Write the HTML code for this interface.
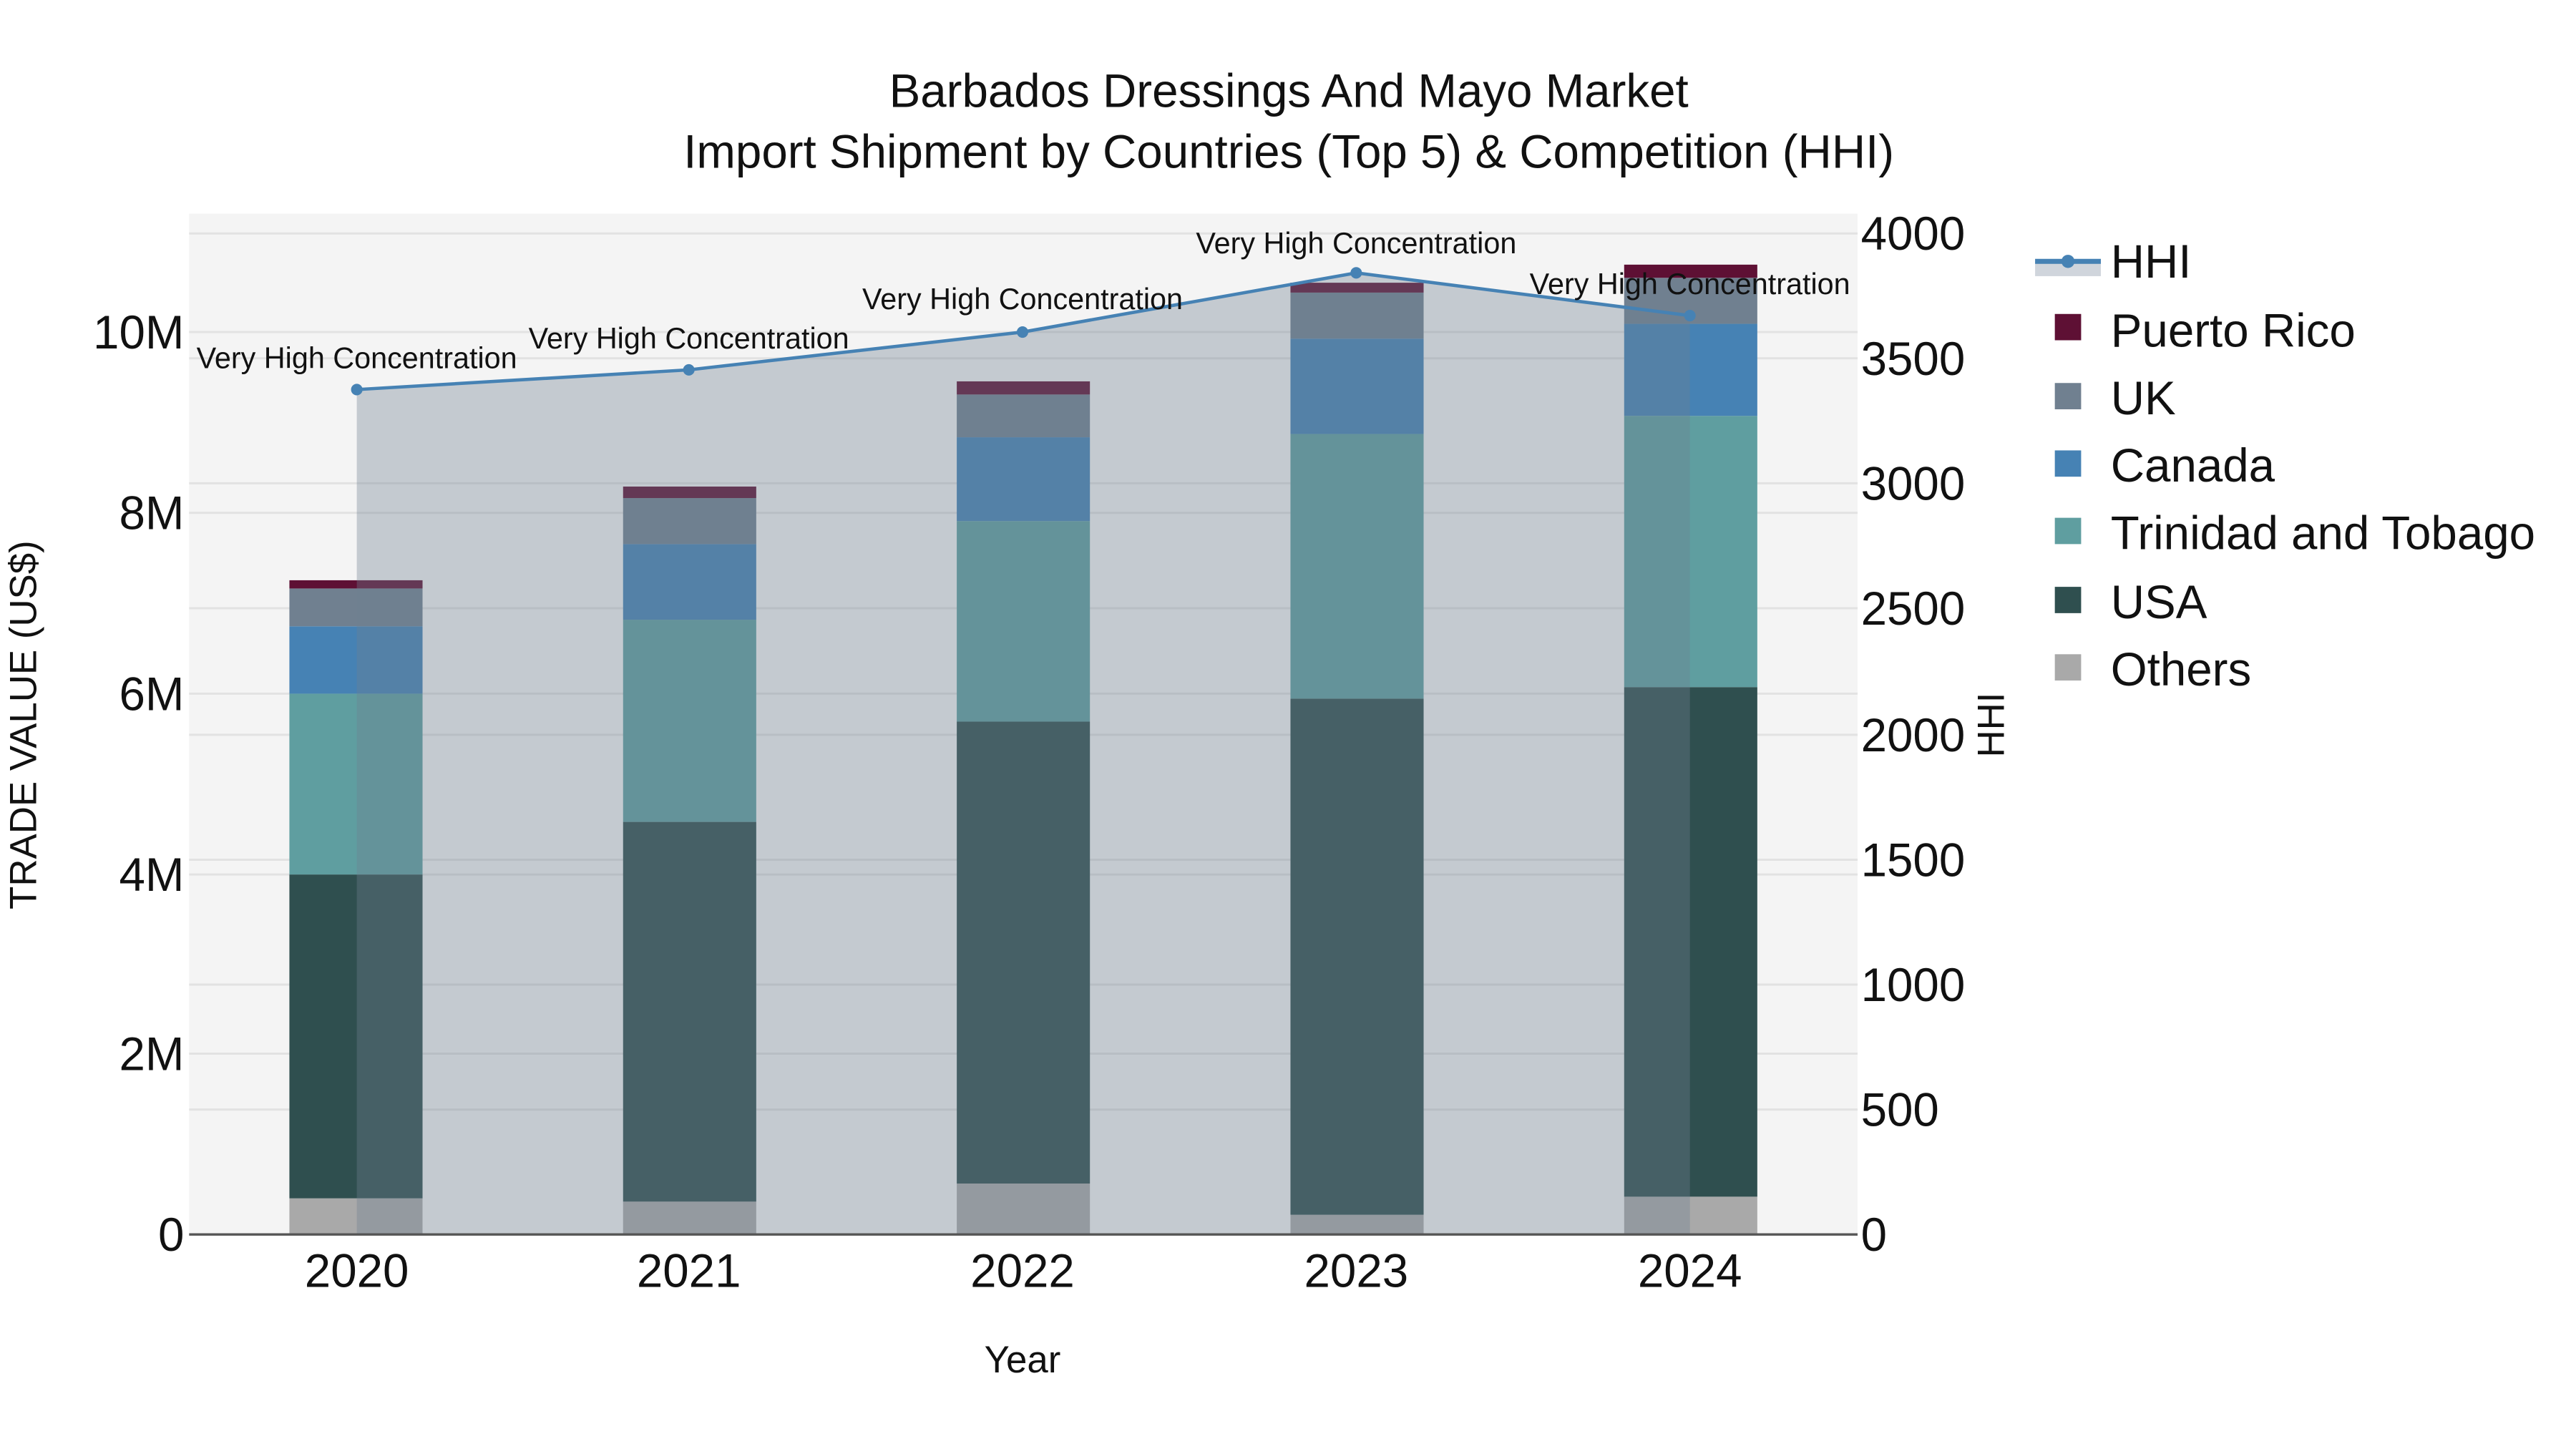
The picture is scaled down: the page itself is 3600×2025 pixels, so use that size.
<!DOCTYPE html>
<html><head><meta charset="utf-8"><style>html,body{margin:0;padding:0;background:#fff;}svg{display:block;}</style></head>
<body>
<svg width="3600" height="2025" viewBox="0 0 1567 881.5" xmlns="http://www.w3.org/2000/svg" font-family="Liberation Sans, Arial, sans-serif">
<rect x="0" y="0" width="1567" height="881.5" fill="#fff"/>
<rect x="115" y="130" width="1015" height="621" fill="#f4f4f4"/>
<g stroke="#e2e2e2" stroke-width="1.3">
<line x1="115" x2="1130" y1="641" y2="641"/><line x1="115" x2="1130" y1="532" y2="532"/><line x1="115" x2="1130" y1="422" y2="422"/><line x1="115" x2="1130" y1="312" y2="312"/><line x1="115" x2="1130" y1="202" y2="202"/>
<line x1="115" x2="1130" y1="675" y2="675"/><line x1="115" x2="1130" y1="599" y2="599"/><line x1="115" x2="1130" y1="523" y2="523"/><line x1="115" x2="1130" y1="447" y2="447"/><line x1="115" x2="1130" y1="370" y2="370"/><line x1="115" x2="1130" y1="294" y2="294"/><line x1="115" x2="1130" y1="218" y2="218"/><line x1="115" x2="1130" y1="142" y2="142"/>
</g>
<g>
<rect x="176" y="729" width="81" height="22" fill="#a9a9a9"/><rect x="176" y="532" width="81" height="197" fill="#2f4f4f"/><rect x="176" y="422" width="81" height="110" fill="#5f9ea0"/><rect x="176" y="381" width="81" height="41" fill="#4682b4"/><rect x="176" y="358" width="81" height="23" fill="#708090"/><rect x="176" y="353" width="81" height="5" fill="#5e1034"/>
<rect x="379" y="731" width="81" height="20" fill="#a9a9a9"/><rect x="379" y="500" width="81" height="231" fill="#2f4f4f"/><rect x="379" y="377" width="81" height="123" fill="#5f9ea0"/><rect x="379" y="331" width="81" height="46" fill="#4682b4"/><rect x="379" y="303" width="81" height="28" fill="#708090"/><rect x="379" y="296" width="81" height="7" fill="#5e1034"/>
<rect x="582" y="720" width="81" height="31" fill="#a9a9a9"/><rect x="582" y="439" width="81" height="281" fill="#2f4f4f"/><rect x="582" y="317" width="81" height="122" fill="#5f9ea0"/><rect x="582" y="266" width="81" height="51" fill="#4682b4"/><rect x="582" y="240" width="81" height="26" fill="#708090"/><rect x="582" y="232" width="81" height="8" fill="#5e1034"/>
<rect x="785" y="739" width="81" height="12" fill="#a9a9a9"/><rect x="785" y="425" width="81" height="314" fill="#2f4f4f"/><rect x="785" y="264" width="81" height="161" fill="#5f9ea0"/><rect x="785" y="206" width="81" height="58" fill="#4682b4"/><rect x="785" y="178" width="81" height="28" fill="#708090"/><rect x="785" y="172" width="81" height="6" fill="#5e1034"/>
<rect x="988" y="728" width="81" height="23" fill="#a9a9a9"/><rect x="988" y="418" width="81" height="310" fill="#2f4f4f"/><rect x="988" y="253" width="81" height="165" fill="#5f9ea0"/><rect x="988" y="197" width="81" height="56" fill="#4682b4"/><rect x="988" y="169" width="81" height="28" fill="#708090"/><rect x="988" y="161" width="81" height="8" fill="#5e1034"/>
</g>
<polygon points="217,237 419,225 622,202 825,166 1028,192 1028,751 217,751" fill="rgba(112,128,144,0.36)"/>
<line x1="115" x2="1130" y1="751" y2="751" stroke="#555" stroke-width="1.5"/>
<polyline points="217,237 419,225 622,202 825,166 1028,192" fill="none" stroke="#4682b4" stroke-width="2"/>
<g fill="#4682b4"><circle cx="217" cy="237" r="3.5"/><circle cx="419" cy="225" r="3.5"/><circle cx="622" cy="202" r="3.5"/><circle cx="825" cy="166" r="3.5"/><circle cx="1028" cy="192" r="3.5"/></g>
<g font-size="18" fill="#111" text-anchor="middle">
<text x="217" y="224">Very High Concentration</text>
<text x="419" y="212">Very High Concentration</text>
<text x="622" y="188">Very High Concentration</text>
<text x="825" y="154">Very High Concentration</text>
<text x="1028" y="179">Very High Concentration</text>
</g>
<g font-size="28.5" fill="#111" text-anchor="middle">
<text x="784" y="65">Barbados Dressings And Mayo Market</text>
<text x="784" y="102">Import Shipment by Countries (Top 5) &amp; Competition (HHI)</text>
</g>
<g font-size="28.5" fill="#111" text-anchor="end">
<text x="112" y="761">0</text><text x="112" y="651">2M</text><text x="112" y="542">4M</text><text x="112" y="432">6M</text><text x="112" y="322">8M</text><text x="112" y="212">10M</text>
</g>
<g font-size="28.5" fill="#111" text-anchor="start">
<text x="1132" y="761">0</text><text x="1132" y="685">500</text><text x="1132" y="609">1000</text><text x="1132" y="533">1500</text><text x="1132" y="457">2000</text><text x="1132" y="380">2500</text><text x="1132" y="304">3000</text><text x="1132" y="228">3500</text><text x="1132" y="152">4000</text>
</g>
<g font-size="28.5" fill="#111" text-anchor="middle">
<text x="217" y="783">2020</text><text x="419" y="783">2021</text><text x="622" y="783">2022</text><text x="825" y="783">2023</text><text x="1028" y="783">2024</text>
</g>
<text x="622" y="835" font-size="23" fill="#111" text-anchor="middle">Year</text>
<text transform="translate(22,441) rotate(-90)" font-size="23" fill="#111" text-anchor="middle">TRADE VALUE (US$)</text>
<text transform="translate(1219,441) rotate(-90)" font-size="23" fill="#111" text-anchor="middle">HHI</text>
<rect x="1238" y="159" width="40" height="9" fill="#d0d5dc"/>
<line x1="1238" x2="1278" y1="159" y2="159" stroke="#4682b4" stroke-width="3"/>
<circle cx="1258" cy="159" r="4" fill="#4682b4"/>
<rect x="1250" y="191" width="16" height="16" fill="#5e1034"/>
<rect x="1250" y="233" width="16" height="16" fill="#708090"/>
<rect x="1250" y="274" width="16" height="16" fill="#4682b4"/>
<rect x="1250" y="315" width="16" height="16" fill="#5f9ea0"/>
<rect x="1250" y="357" width="16" height="16" fill="#2f4f4f"/>
<rect x="1250" y="398" width="16" height="16" fill="#a9a9a9"/>
<g font-size="28.5" fill="#111">
<text x="1284" y="169">HHI</text><text x="1284" y="211">Puerto Rico</text><text x="1284" y="252">UK</text><text x="1284" y="293">Canada</text><text x="1284" y="334">Trinidad and Tobago</text><text x="1284" y="376">USA</text><text x="1284" y="417">Others</text>
</g>
</svg>
</body></html>
